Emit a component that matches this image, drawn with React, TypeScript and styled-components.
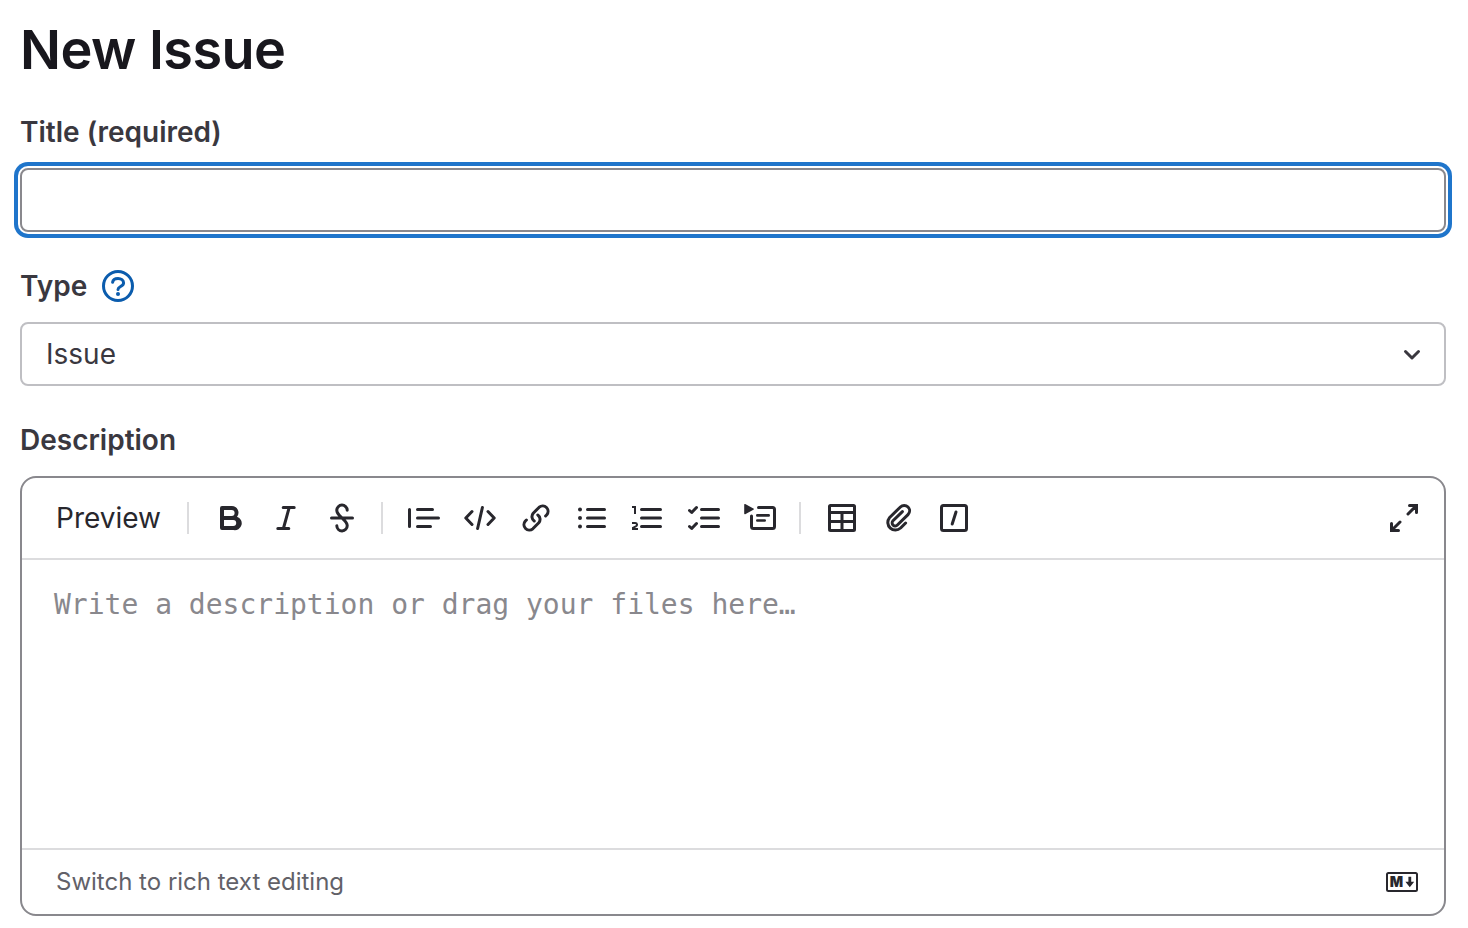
import React from "react";
import styled, { createGlobalStyle } from "styled-components";

const GlobalStyle = createGlobalStyle`
  *, *::before, *::after { box-sizing: border-box; }
  body {
    margin: 0;
    background: #fff;
    color: #3a383f;
    font-family: Inter, "Noto Sans", sans-serif;
    font-size: 28px;
    line-height: 32px;
  }
  button, input, select, textarea { font: inherit; color: inherit; margin: 0; }
`;

const Page = styled.main`
  padding: 18px 22px 12px 20px;
`;

const Heading = styled.h1`
  margin: 0 0 34px;
  color: #18171d;
  font-size: 54px;
  font-weight: 600;
  line-height: 64px;
  letter-spacing: -0.01em;
`;

const Form = styled.form`
  display: flex;
  flex-direction: column;
  gap: 38px;
`;

const Field = styled.div`
  display: flex;
  flex-direction: column;
  gap: 20px;
`;

const LabelRow = styled.div`
  display: flex;
  align-items: center;
  gap: 15px;
`;

const Label = styled.label`
  font-weight: 600;
`;

const TitleInput = styled.input`
  width: 100%;
  height: 64px;
  padding: 0 24px;
  border: 2px solid #89888d;
  border-radius: 8px;
  background: #fff;
  outline: none;
  box-shadow: 0 0 0 2px #fff, 0 0 0 6px #1f75cb;
`;

const SelectWrap = styled.div`
  display: grid;
  align-items: center;

  > * { grid-area: 1 / 1; }
  > svg { justify-self: end; margin-right: 18px; color: #3a383f; pointer-events: none; }
`;

const Select = styled.select`
  appearance: none;
  width: 100%;
  height: 64px;
  padding: 0 56px 0 24px;
  border: 2px solid #bfbfc3;
  border-radius: 8px;
  background: #fff;
`;

const Editor = styled.div`
  display: flex;
  flex-direction: column;
  overflow: hidden;
  border: 2px solid #89888d;
  border-radius: 16px;
`;

const Toolbar = styled.div`
  display: flex;
  align-items: center;
  gap: 8px;
  height: 82px;
  padding: 0 16px 0 23px;
  border-bottom: 2px solid #dcdcde;
`;

const Divider = styled.span`
  width: 2px;
  height: 32px;
  margin: 0 9px 0 7px;
  background: #dcdcde;
`;

const TextButton = styled.button<{ $small?: boolean }>`
  padding: 0 11px;
  border: 0;
  background: none;
  cursor: pointer;
  color: ${(p) => (p.$small ? "#626168" : "#28272d")};
  font-size: ${(p) => (p.$small ? "24px" : "28px")};
  line-height: 48px;
`;

const IconButton = styled.button<{ $end?: boolean }>`
  display: grid;
  place-items: center;
  width: 48px;
  height: 48px;
  padding: 0;
  border: 0;
  border-radius: 8px;
  background: none;
  color: #28272d;
  cursor: pointer;
  margin-left: ${(p) => (p.$end ? "auto" : "0")};
`;

const HelpButton = styled(IconButton)`
  width: 32px;
  height: 32px;
  border-radius: 50%;
  color: #0b5cad;
`;

const TextArea = styled.textarea`
  display: block;
  width: 100%;
  height: 288px;
  padding: 24px 32px;
  border: 0;
  outline: none;
  resize: none;
  background: #fff;
  font-family: "DejaVu Sans Mono", monospace;
  line-height: 42px;

  &::placeholder { color: #89888d; opacity: 1; }
`;

const Footer = styled.div`
  display: flex;
  align-items: center;
  justify-content: space-between;
  height: 66px;
  padding: 0 18px 0 23px;
  border-top: 2px solid #dcdcde;
`;

const Svg = styled.svg`
  display: block;
  width: 32px;
  height: 32px;
  fill: none;
  stroke: currentColor;
  stroke-width: 1.5;
  stroke-linecap: round;
  stroke-linejoin: round;
`;

const Icon = ({ children }: { children: React.ReactNode }) => (
  <Svg viewBox="0 0 16 16" aria-hidden="true">{children}</Svg>
);

type Tool = { name: string; icon: React.ReactNode };

const textTools: Tool[] = [
  {
    name: "Add bold text",
    icon: (
      <path
        fill="currentColor"
        stroke="none"
        fillRule="evenodd"
        d="M3 3a1 1 0 0 1 1-1h4.9a3.3 3.3 0 0 1 2.6 5.35A3.45 3.45 0 0 1 9.7 14H4a1 1 0 0 1-1-1V3zm2 1v3h3.8a1.5 1.5 0 0 0 0-3H5zm0 5v3h4.6a1.5 1.5 0 0 0 0-3H5z"
      />
    ),
  },
  { name: "Add italic text", icon: <path d="M6.6 2.75h5.5M3.9 13.25h5.5M9.6 2.75l-2.9 10.5" /> },
  {
    name: "Add strikethrough text",
    icon: <path d="M2.75 8h10.5M10.6 4.1a2.6 2.6 0 0 0-5.2.1c0 1.5 1.1 2.4 2.6 3.8s2.6 2.3 2.6 3.8a2.6 2.6 0 0 1-5.2.1" />,
  },
];

const blockTools: Tool[] = [
  { name: "Insert a quote", icon: <path d="M.75 3.75v8.5M4.75 3.75h7.5M4.75 8h10.5M4.75 12.25h6.5" /> },
  { name: "Insert code", icon: <path d="M4 4.75L.9 8 4 11.25M12 4.75L15.1 8 12 11.25M9.2 2.75l-2.4 10.5" /> },
  {
    name: "Add a link",
    icon: (
      <path d="M12.8 7l.6-.6a2.7 2.7 0 0 0-3.8-3.8l-3 3a2.7 2.7 0 0 0 .5 3.9M3.2 9l-.6.6a2.7 2.7 0 0 0 3.8 3.8l3-3a2.7 2.7 0 0 0-.5-3.9" />
    ),
  },
  {
    name: "Add a bullet list",
    icon: (
      <>
        <path d="M5.75 3.75h8.5M5.75 8h8.5M5.75 12.25h8.5" />
        <path strokeWidth="2" d="M2 3.75h0M2 8h0M2 12.25h0" />
      </>
    ),
  },
  {
    name: "Add a numbered list",
    icon: (
      <>
        <path d="M4.75 3.75h9.5M4.75 8h9.5M4.75 12.25h9.5" />
        <path strokeWidth="1" strokeLinecap="butt" strokeLinejoin="miter" d="M0 2.5h1.5V6M0 10.5h1.6c1.1 0 1.2 1.3.3 1.7L.5 12.9v.6H3" />
      </>
    ),
  },
  {
    name: "Add a checklist",
    icon: (
      <path d="M6.75 3.75h8.5M6.75 8h8.5M6.75 12.25h8.5M.75 4.25l1.1 1L4.25 2.75M.75 12.25l1.1 1 2.4-2.5" />
    ),
  },
  {
    name: "Add a collapsible section",
    icon: (
      <>
        <path d="M7.25 2.75h7a1 1 0 0 1 1 1v8.5a1 1 0 0 1-1 1h-9.5a1 1 0 0 1-1-1V7" />
        <path strokeWidth="1.3" d="M6.65 6.7h5.7M6.65 9.25h3.7" />
        <path fill="currentColor" stroke="none" d="M.1 1.3c0-.3.2-.4.5-.3L4.7 3.2c.4.2.4.5 0 .7L.6 6.1c-.3.1-.5 0-.5-.3z" />
      </>
    ),
  },
];

const insertTools: Tool[] = [
  {
    name: "Add a table",
    icon: (
      <>
        <rect x="1.75" y="1.75" width="12.5" height="12.5" rx=".5" />
        <path strokeLinecap="butt" d="M1.75 5.25h12.5M1.75 9.75h12.5M8 5.25v9" />
      </>
    ),
  },
  {
    name: "Attach a file or image",
    icon: (
      <path d="M11.8 10.5l-2.5 2.5a3.8 3.8 0 0 1-5.6-5.1l5.5-5.4a2.65 2.65 0 0 1 3.8 3.8l-5.3 5.2a1.5 1.5 0 0 1-2.2-2.1l4.7-4.6" />
    ),
  },
  {
    name: "Add a quick action",
    icon: (
      <>
        <rect x="1.75" y="1.75" width="12.5" height="12.5" rx="1" />
        <path d="M9 5L7.1 11" />
      </>
    ),
  },
];

const ToolButtons = ({ tools }: { tools: Tool[] }) => (
  <>
    {tools.map((tool) => (
      <IconButton key={tool.name} type="button" aria-label={tool.name}>
        <Icon>{tool.icon}</Icon>
      </IconButton>
    ))}
  </>
);

export default function App() {
  return (
    <>
      <GlobalStyle />
      <Page>
        <Heading>New Issue</Heading>
        <Form>
          <Field>
            <Label htmlFor="issue-title">Title (required)</Label>
            <TitleInput id="issue-title" type="text" required />
          </Field>

          <Field>
            <LabelRow>
              <Label htmlFor="issue-type">Type</Label>
              <HelpButton type="button" aria-label="About issue types">
                <Icon>
                  <circle cx="8" cy="8" r="7.25" />
                  <path d="M5.3 6.1C5.5 4.9 6.6 4.25 8 4.25c1.6 0 2.8.9 2.8 2.2C10.8 8.3 8 8.2 8 9.7" />
                  <path strokeWidth="2" d="M8 12h0" />
                </Icon>
              </HelpButton>
            </LabelRow>
            <SelectWrap>
              <Select id="issue-type" defaultValue="issue">
                <option value="issue">Issue</option>
              </Select>
              <Icon>
                <path d="M4.75 6.75L8 10l3.25-3.25" />
              </Icon>
            </SelectWrap>
          </Field>

          <Field>
            <Label htmlFor="issue-description">Description</Label>
            <Editor>
              <Toolbar>
                <TextButton type="button">Preview</TextButton>
                <Divider />
                <ToolButtons tools={textTools} />
                <Divider />
                <ToolButtons tools={blockTools} />
                <Divider />
                <ToolButtons tools={insertTools} />
                <IconButton type="button" aria-label="Go full screen" $end>
                  <Icon>
                    <path strokeLinejoin="miter" d="M10 6l4-4M10.75 1.75h3.5v3.5M6 10l-4 4M5.25 14.25h-3.5v-3.5" />
                  </Icon>
                </IconButton>
              </Toolbar>
              <TextArea id="issue-description" placeholder="Write a description or drag your files here…" />
              <Footer>
                <TextButton type="button" $small>Switch to rich text editing</TextButton>
                <IconButton type="button" aria-label="Markdown is supported">
                  <Icon>
                    <rect x=".5" y="3.5" width="15" height="9" rx=".75" strokeWidth="1" />
                    <text x="1.9" y="10.5" fill="currentColor" stroke="none" fontSize="7" fontWeight="900">M</text>
                    <path fill="currentColor" stroke="none" d="M11.2 5.4h1.4v2.5h1.5L11.9 10.6 9.7 7.9h1.5z" />
                  </Icon>
                </IconButton>
              </Footer>
            </Editor>
          </Field>
        </Form>
      </Page>
    </>
  );
}
